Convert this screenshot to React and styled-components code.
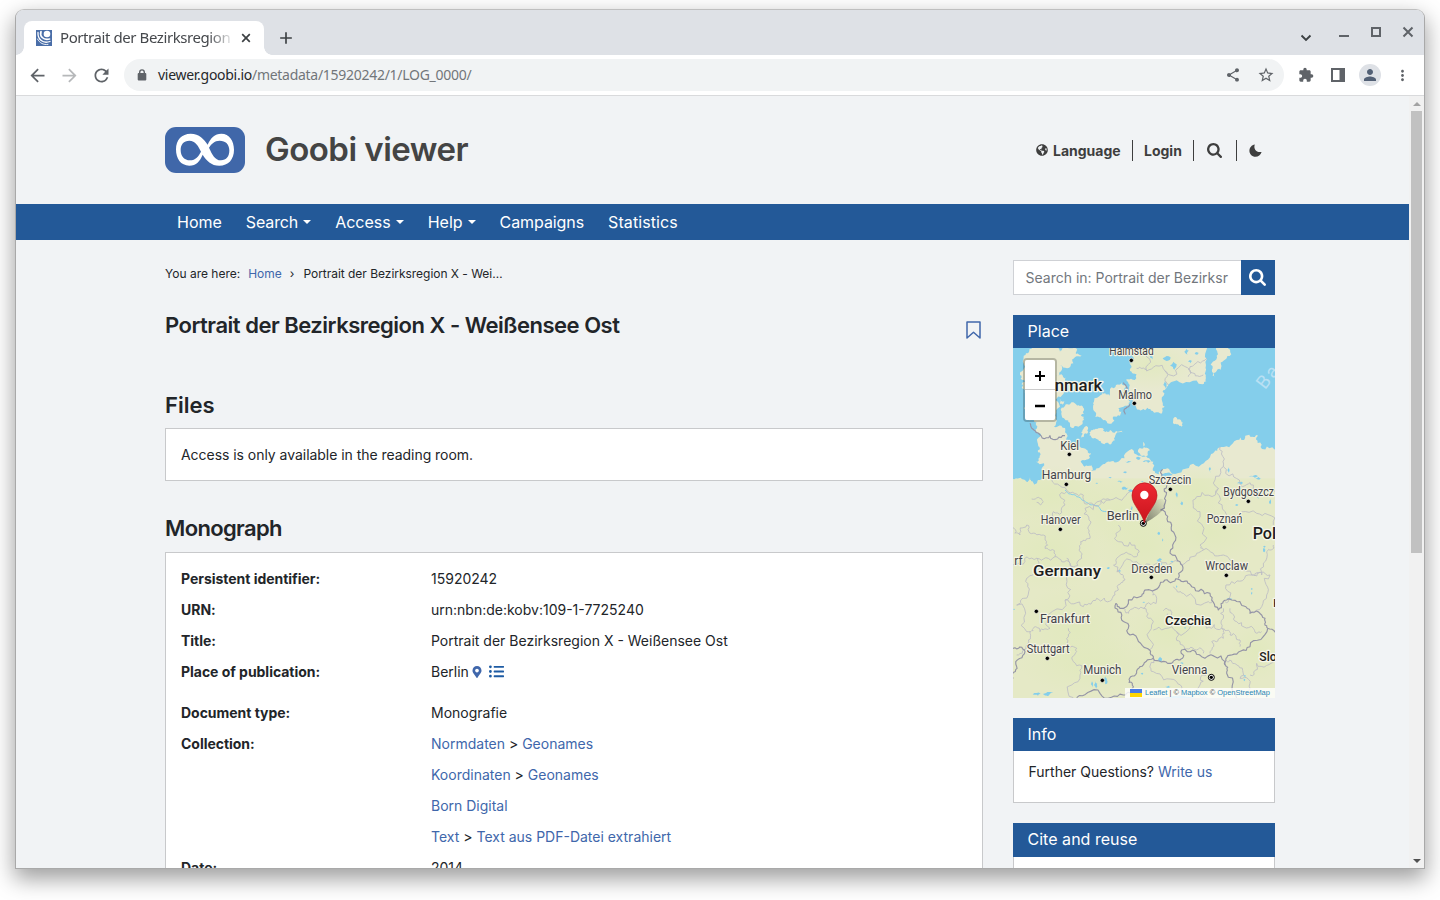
import React from "react";
import styled, { createGlobalStyle } from "styled-components";
import {
  MdArrowBack, MdArrowForward, MdRefresh, MdShare, MdStarBorder,
  MdExtension, MdPerson, MdMoreVert, MdAdd,
} from "react-icons/md";
import { FaGlobeAmericas, FaMapMarkerAlt, FaListUl } from "react-icons/fa";

const BLUE = "#235998";
const LINK = "#4067ab";

const GlobalStyle = createGlobalStyle`
  * { box-sizing: border-box; }
  body { margin: 0; background: #fff; overflow: hidden; }
  svg { display: block; flex: none; }
`;

const Desktop = styled.div`
  height: 900px;
  padding: 9px 15px 31px;
  overflow: hidden;
`;
const Window = styled.div`
  width: 1410px;
  height: 860px;
  border: 1px solid #a9a9a9;
  border-top-color: #bfbfbf;
  border-radius: 9px 9px 0 0;
  overflow: hidden;
  background: #f1f3f5;
  box-shadow: 0 9px 22px 1px rgba(0, 0, 0, 0.38);
  display: flex;
  flex-direction: column;
`;

/* ---------- browser chrome ---------- */
const TabStrip = styled.div`
  height: 45px;
  flex: none;
  background: #dee1e6;
  display: flex;
  align-items: flex-end;
  padding-left: 8px;
  font-family: "Noto Sans", sans-serif;
`;
const Tab = styled.div`
  position: relative;
  width: 240px;
  height: 34px;
  background: #fff;
  border-radius: 8px 8px 0 0;
  display: flex;
  align-items: center;
  padding: 0 8px 0 12px;
  &::before, &::after {
    content: "";
    position: absolute;
    bottom: 0;
    width: 8px;
    height: 8px;
  }
  &::before { left: -8px; background: radial-gradient(circle at 0 0, transparent 7.5px, #fff 8px); }
  &::after { right: -8px; background: radial-gradient(circle at 100% 0, transparent 7.5px, #fff 8px); }
`;
const TabTitle = styled.div`
  width: 174px;
  margin-left: 8px;
  font-size: 15px;
  letter-spacing: -0.42px;
  line-height: 31px;
  height: 33px;
  color: #45484c;
  white-space: nowrap;
  overflow: hidden;
  mask-image: linear-gradient(to right, #000 148px, transparent 175px);
`;
const TabClose = styled.div`
  margin-left: 4px;
  color: #3c4043;
`;
const NewTab = styled.div`
  align-self: flex-end;
  margin: 0 0 7px 12px;
  color: #3c4043;
`;
const WindowButtons = styled.div`
  margin-left: auto;
  display: flex;
  align-items: center;
  height: 45px;
  color: #5f6368;
`;
const Toolbar = styled.div`
  height: 41px;
  flex: none;
  background: #fff;
  border-bottom: 1px solid #d9dadc;
  display: flex;
  align-items: center;
  padding-left: 11px;
  color: #5f6368;
`;
const ToolIcon = styled.div`
  width: 21px;
  margin-right: 11px;
  opacity: ${(p) => (p.$dim ? 0.45 : 1)};
`;
const AddressBar = styled.div`
  height: 32px;
  width: 1160px;
  margin-left: 1px;
  border-radius: 16px;
  background: #f1f3f4;
  display: flex;
  align-items: center;
  padding: 0 9px 0 13px;
`;
const Url = styled.div`
  flex: 1;
  margin-left: 11px;
  font: 14px/30px "Noto Sans", sans-serif;
  letter-spacing: -0.28px;
  color: #72767a;
  span { color: #26282b; }
`;
const ActionIcons = styled.div`
  display: flex;
  align-items: center;
  gap: 16px;
  margin-left: ${(p) => p.$l}px;
`;
const Avatar = styled.div`
  width: 22px;
  height: 22px;
  margin: 0 -3px;
  border-radius: 50%;
  background: #dee1e6;
  display: grid;
  place-items: center;
  color: #526075;
`;

/* ---------- page ---------- */
const Viewport = styled.div`
  flex: 1;
  min-height: 0;
  display: flex;
`;
const Page = styled.div`
  width: 1393px;
  height: 772px;
  overflow: hidden;
  font-family: Inter, sans-serif;
  font-size: 14px;
  color: #222529;
`;
const Scrollbar = styled.div`
  width: 15px;
  background: #f1f1f1;
  display: flex;
  flex-direction: column;
  align-items: center;
`;
const Thumb = styled.div`
  width: 11px;
  height: 442px;
  background: #c1c1c1;
`;
const ScrollArrow = styled.div`
  height: 15px;
  display: grid;
  place-items: center;
  margin-top: ${(p) => (p.$end ? "auto" : 0)};
`;
const PageHeader = styled.header`
  height: 108px;
  width: 1259px;
  padding: 0 13px 0 149px;
  display: flex;
  align-items: center;
`;
const Brand = styled.div`
  margin: -2px 0 0 20px;
  font-size: 33px;
  font-weight: 600;
  line-height: 46px;
  letter-spacing: -0.52px;
  color: #444;
`;
const UserNav = styled.div`
  margin-left: auto;
  display: flex;
  align-items: center;
  font-weight: 700;
  color: #3e3e3e;
`;
const UserItem = styled.div`
  height: 21px;
  width: ${(p) => p.$w}px;
  display: flex;
  align-items: center;
  gap: 5px;
  padding-left: ${(p) => p.$pad ?? 11}px;
  border-left: ${(p) => (p.$first ? "0" : "1px solid #3e3e3e")};
`;
const MainNav = styled.nav`
  height: 36px;
  background: ${BLUE};
  padding-left: 149px;
  display: flex;
  color: #fff;
`;
const NavItem = styled.div`
  padding: 0 12px;
  font-size: 16px;
  line-height: 36px;
  letter-spacing: ${(p) => p.$ls || 0}px;
  display: flex;
  align-items: center;
`;
const Caret = styled.i`
  margin-left: 5px;
  border: 4px solid transparent;
  border-top-color: #fff;
  border-bottom: 0;
`;
const Columns = styled.div`
  padding: 20px 0 0 149px;
  display: grid;
  grid-template-columns: 818px 262px;
  gap: 30px;
`;
const Crumbs = styled.div`
  height: 26px;
  display: flex;
  font-size: 12px;
  line-height: 27px;
  gap: 8px;
`;
const Current = styled.span`
  margin-left: 1px;
  letter-spacing: -0.03px;
`;
const Link = styled.a`
  color: ${LINK};
`;
const TitleRow = styled.div`
  margin-top: 24px;
  height: 30px;
  display: flex;
  justify-content: space-between;
  align-items: center;
`;
const Heading = styled.h2`
  margin: ${(p) => p.$top || 0}px 0 0;
  font-size: 22px;
  font-weight: 600;
  line-height: 30px;
  letter-spacing: ${(p) => p.$ls || 0}px;
`;
const Bookmark = styled.div`
  margin: 9px 2px 0 0;
`;
const Panel = styled.div`
  margin-top: ${(p) => p.$top}px;
  background: #fff;
  border: 1px solid #c8c9cb;
  padding: ${(p) => p.$pad || 11}px 15px;
`;
const Row = styled.div`
  display: grid;
  grid-template-columns: 250px 1fr;
  line-height: 31px;
  margin-bottom: ${(p) => p.$gap || 0}px;
  dt { font-weight: 700; letter-spacing: -0.03px; }
`;
const Value = styled.div`
  display: flex;
  align-items: center;
  white-space: pre;
`;
const Notice = styled.div`
  line-height: 29px;
  letter-spacing: -0.04px;
`;
const Inline = styled.span`
  margin-left: ${(p) => p.$l}px;
  color: ${(p) => p.$c};
`;
const SearchBox = styled.div`
  height: 35px;
  display: flex;
`;
const SearchField = styled.div`
  width: 228px;
  border: 1px solid #cfd1d5;
  border-right: 0;
  background: #fff;
  padding-left: 11.5px;
  line-height: 34px;
  color: #72777d;
  white-space: nowrap;
`;
const SearchButton = styled.div`
  width: 34px;
  background: ${BLUE};
  color: #fff;
  display: grid;
  place-items: center;
  padding-right: 1px;
`;
const Widget = styled.section`
  margin-top: 20px;
`;
const WidgetTitle = styled.div`
  height: ${(p) => p.$h || 33}px;
  background: ${BLUE};
  color: #fff;
  font-size: 16px;
  line-height: 33px;
  padding-left: 14.500px;
  letter-spacing: 0.03px;
`;
const WidgetBody = styled.div`
  height: 52px;
  background: #fff;
  border: 1px solid #c8c9cb;
  border-top: 0;
  padding-left: 14.5px;
  line-height: 42px;
`;
const MapFrame = styled.div`
  position: relative;
  height: 350px;
`;
const ZoomControl = styled.div`
  position: absolute;
  left: 10px;
  top: 10px;
  width: 34px;
  border: 2px solid rgba(0, 0, 0, 0.22);
  background-clip: padding-box;
  border-radius: 4px;
`;
const ZoomButton = styled.div`
  height: 30px;
  background: #fff;
  display: grid;
  place-items: center;
  padding-top: 2px;
  border-radius: ${(p) => (p.$top ? "2px 2px 0 0" : "0 0 2px 2px")};
  border-bottom: ${(p) => (p.$top ? "1px solid #ccc" : "0")};
`;
const Attribution = styled.div`
  position: absolute;
  right: 0;
  bottom: 0;
  height: 10px;
  width: 150px;
  padding-left: 5px;
  background: rgba(255, 255, 255, 0.8);
  display: flex;
  align-items: center;
  gap: 3px;
  font: 7.5px/10px "Liberation Sans", sans-serif;
  letter-spacing: -0.02px;
  white-space: nowrap;
  color: #444;
  a { color: #2a86b4; }
`;

/* ---------- drawings ---------- */
function SearchIcon({ size }) {
  return (
    <svg width={size} height={size} viewBox="0 0 1664 1664" fill="currentColor">
      <path d="M1152 704q0-185-131.500-316.500t-316.500-131.500-316.500 131.500-131.500 316.500 131.500 316.500 316.500 131.500 316.500-131.500 131.500-316.500zm512 832q0 52-38 90t-90 38q-54 0-90-38l-343-342q-179 124-399 124-143 0-273.500-55.500t-225-150-150-225-55.500-273.500 55.500-273.500 150-225 225-150 273.500-55.500 273.500 55.500 225 150 150 225 55.500 273.500q0 220-124 399l343 343q37 37 37 90z" />
    </svg>
  );
}

function Moon() {
  return (
    <svg width="13" height="13" viewBox="0 0 13 13" fill="currentColor">
      <path d="M5.800 0.400C4.200 4.500 7.200 8.900 12.600 7.900C11.700 10.900 9.300 12.700 6.500 12.700C3 12.700 0.400 10 0.400 6.700C0.400 3.500 2.700 0.900 5.800 0.400Z" />
    </svg>
  );
}

function Lock() {
  return (
    <svg width="10" height="12" viewBox="0 0 10 12">
      <rect x="0.700" y="4" width="8.600" height="7.500" rx="1" fill="currentColor" />
      <path d="M2.700 4.500V3.200a2.300 2.300 0 0 1 4.600 0V4.500" fill="none" stroke="currentColor" strokeWidth="1.400" />
    </svg>
  );
}

function Logo() {
  return (
    <svg width="80" height="46" viewBox="45 51 240 138">
      <rect x="45" y="51" width="240" height="138" rx="33" fill="#4067a9" />
      <path
        fill="#fff"
        fillRule="evenodd"
        d="M122 71C148 71 162 88 173 104C182 84 194 71 214 71C238 71 252 92 252 119C252 148 235 167 208 167C184 167 169 152 158 134C150 153 139 167 118 167C92 167 78 146 78 118C78 90 95 71 122 71Z
           M118 92C101 92 92 103 92 120C92 139 103 151 120 151C137 151 146 138 153 125C145 108 136 92 118 92Z
           M209 92C193 92 184 102 177 113C186 132 194 151 213 151C229 151 238 140 238 121C238 103 227 92 209 92Z"
      />
    </svg>
  );
}

function Favicon() {
  return (
    <svg width="16" height="16" viewBox="0 0 16 16">
      <rect width="16" height="16" fill="#4a6ea8" />
      <circle cx="11" cy="4" r="3.300" fill="#fff" />
      <g fill="none" stroke="#fff" strokeLinecap="round">
        <path d="M5 1.500C3.500 6 7 10.500 13.500 9" strokeWidth="1.700" />
        <path d="M2 2.500C1.500 9.500 7 14 14 11.500" strokeWidth="1.300" />
        <path d="M1.500 9C3.500 13 7.500 15.200 12 14.400" strokeWidth="0.900" />
      </g>
    </svg>
  );
}

/* Midpoint displacement turns a coarse outline into a natural coastline or border. */
function rough(points, amount, closed) {
  let seed = points[0] * 7.13 + points[1] * 3.71 + points.length;
  const rand = () => {
    seed = (seed * 16807 + 11) % 2147483647;
    return (seed % 1000) / 1000 - 0.5;
  };
  let pts = [];
  for (let i = 0; i < points.length; i += 2) pts.push([points[i], points[i + 1]]);
  if (closed) pts.push(pts[0]);
  for (let k = 0; k < 3; k++) {
    const next = [pts[0]];
    for (let i = 1; i < pts.length; i++) {
      const [ax, ay] = pts[i - 1];
      const [bx, by] = pts[i];
      const d = Math.hypot(bx - ax, by - ay);
      if (d > 7) {
        const o = rand() * amount * Math.min(d, 45);
        next.push([(ax + bx) / 2 - ((by - ay) / d) * o, (ay + by) / 2 + ((bx - ax) / d) * o]);
      }
      next.push(pts[i]);
    }
    pts = next;
  }
  return "M" + pts.map((p) => p.map((n) => n.toFixed(1)).join(" ")).join("L") + (closed ? "Z" : "");
}

const LAND = [
  [0,402,35,402,48,410,60,396,72,420,84,405,102,392,95,375,102,355,78,350,84,322,97,310,82,290,93,268,76,255,82,230,50,225,42,190,36,130,45,110,30,85,42,60,48,25,75,9,140,9,150,20,172,9,196,9,215,32,190,55,150,60,137,90,168,98,165,128,137,165,150,185,137,222,132,245,165,262,168,285,195,292,213,308,243,325,240,337,212,350,218,358,248,356,243,378,268,368,290,352,330,346,372,318,392,332,430,350,428,372,447,388,480,378,540,360,600,337,626,308,680,285,718,269,744,272,756,312,810,328,810,1070,0,1070],
  [165,182,198,178,222,196,222,225,205,245,180,240,162,220],
  [252,168,272,150,298,152,300,132,318,120,335,112,350,125,352,158,362,170,345,182,325,190,330,212,304,236,285,225,256,216,250,195],
  [238,262,265,250,285,262,300,255,318,258,338,262,315,286,290,293,265,284,244,277],
  [222,248,230,243,222,275,215,278],
  [358,0,372,42,362,70,380,88,348,104,360,140,370,178,395,195,428,198,450,205,464,185,458,140,478,116,500,106,578,118,587,95,588,60,606,0],
  [630,0,662,0,650,40,632,74,613,98,608,70,620,32],
  [493,217,519,233,515,250,492,238],
  [388,310,400,290,406,308,420,316,408,334,392,330],
  [150,162,163,168,160,182,150,176],
];

const REGIONS = [
  [120,395,170,435,220,450,250,480,300,465,360,440],
  [170,440,165,480,130,500,125,540],
  [300,465,225,490,235,545,240,580,212,590,215,640,180,655,170,640],
  [9,548,30,570,50,540,75,565,100,570,105,610,135,635],
  [325,540,325,590,385,615,380,635,320,640,322,680,345,705,325,735,305,765],
  [135,635,180,655,170,700,165,765,220,785,260,760,305,765],
  [9,660,30,655,80,640,135,635],
  [80,640,90,670,50,700,40,760,20,780,50,860,70,850,90,860,120,850,165,765],
  [175,850,175,900,200,920,190,950,210,990,190,1058],
  [60,860,50,900,20,930],
  [320,680,380,650,440,655,505,650],
  [510,655,560,625,580,615,640,630,660,645,725,690,755,690,770,620,790,600],
  [570,500,570,600,580,615],
  [630,305,640,365,625,430,560,455,570,500],
  [640,365,690,415,730,420,795,440],
  [625,430,650,510,740,505,790,540],
  [725,690,665,710,655,770,645,770],
  [725,690,780,690,770,750,720,800],
  [430,735,440,760,400,790,355,805,335,790],
  [400,790,430,830,425,910,415,915],
  [430,855,500,860,510,890,550,910,580,925],
  [500,860,590,850,635,850,640,880,605,890,600,925],
  [490,725,520,745,595,770,610,765],
  [640,790,635,850,660,870,690,885,690,905],
  [660,790,680,830,730,850,755,860],
  [380,70,410,78,465,78,480,90,540,75,580,90],
  [535,95,540,65,590,40],[405,9,408,75],[465,78,475,120],
  [650,950,680,960,690,1000,720,1030,710,1058],
  [720,990,740,955,795,945],[430,940,430,980,500,1010,500,1058],
  [590,980,570,1020,590,1058],
];
const BORDERS = [
  [60,235,78,262,120,272,165,272],
  [458,373,470,410,466,455,452,495,485,540,488,600,510,650,505,700],
  [318,775,330,790,390,755,420,735,465,705,510,705,545,725,600,745,625,795,650,765,690,770,720,805,765,820,773,850,795,862],
  [318,775,335,825,360,870,410,910,430,940],
  [430,940,480,955,510,945,515,915,575,935,645,950,645,960],
  [773,850,720,905,665,930,645,950,650,985,680,1060],
  [430,940,390,965,362,995,370,1025,340,1050,270,1045,200,1058],
  [9,910,45,920,20,965,10,1000],
  [346,208,348,190,360,178],[340,113,352,130,340,145],
];
const WATER = [
  [470,40,12,7],[490,62,10,12],[425,35,5,12],[530,20,7,9],[560,25,6,4],[465,120,5,12],[540,50,6,5],
  [385,340,7,5],[330,410,8,3],[345,430,10,5],[362,437,8,4],[345,382,6,3],[300,398,5,2],[470,390,18,6],
  [395,410,6,2],[500,450,3,8],[515,475,4,6],[365,490,3,8],[415,485,4,3],[410,350,12,4],[600,375,3,9],
  [655,375,3,8],[690,415,9,4],[730,395,14,3],[680,480,5,3],[745,450,3,12],[380,480,3,5],[745,400,9,4],
  [295,669,5,3],[328,678,5,3],[446,565,4,5],[458,587,2,7],[448,645,8,5],[452,657,5,3],[485,650,5,3],
  [475,674,5,2],[762,615,3,7],[763,605,4,3],[725,732,3,3],[725,745,2,5],[658,762,9,3],[500,725,2,4],
  [401,772,4,2],[525,849,3,2],[450,943,6,8],[246,1018,3,9],[257,1020,5,11],[285,1005,5,13],[112,1045,18,4],
  [704,993,4,3],[703,1005,3,4],[80,1048,12,4],[515,955,6,3],[12,793,3,2],[396,986,4,3],[475,1025,9,3],
  [780,470,3,8],[355,350,9,2],[260,415,4,2],
];
const LABELS = [
  ["Halmstad", 298, 29, 133], ["Malmo", 325, 161, 101], ["Kiel", 151, 314, 56],
  ["Hamburg", 95, 403, 149], ["Szczecin", 416, 418, 128], ["Bydgoszcz", 640, 453, 152],
  ["Berlin", 290, 525, 97], ["Hanover", 92, 537, 120], ["Poznań", 590, 534, 107],
  ["Dresden", 364, 684, 123], ["Wroclaw", 586, 676, 128], ["rf", 13, 661, 25],
  ["Frankfurt", 90, 833, 150], ["Stuttgart", 50, 924, 129], ["Munich", 220, 987, 114],
  ["Vienna", 485, 986, 107],
];
const COUNTRIES = [
  ["nmark", 134, 137, 143, 48], ["Germany", 69, 692, 204, 46], ["Pol", 728, 583, 70, 48],
  ["Czechia", 465, 841, 139, 40], ["Slo", 748, 948, 52, 38], ["K", 790, 785, 20, 34],
];
const DOTS = [
  [364,46],[373,175],[178,328],[169,418],[481,433],[715,469],[151,553],[643,547],
  [424,697],[649,691],[79,799],[112,940],[277,1006],
];
const HUES = [
  [120,450,130,60],[420,60,110,50],[330,500,120,70],[560,440,90,60],[120,620,120,80],[400,600,100,70],
  [200,850,130,90],[480,860,100,60],[250,960,160,60],[600,560,110,60],[740,920,60,60],
];

function RegionMap() {
  return (
    <svg width="262" height="350" viewBox="9 9 786 1050">
      <defs>
        <radialGradient id="green">
          <stop offset="0" stopColor="#dfe9ba" />
          <stop offset="1" stopColor="#dfe9ba" stopOpacity="0" />
        </radialGradient>
        <clipPath id="land">
          {LAND.map((p, i) => <path key={i} d={rough(p, 0.7, true)} />)}
        </clipPath>
        <linearGradient id="pin" x1="0" x2="0" y1="0" y2="1">
          <stop offset="0" stopColor="#ee2a33" />
          <stop offset="1" stopColor="#c9141d" />
        </linearGradient>
        <linearGradient id="shade" x1="0" x2="1" y1="1" y2="0">
          <stop offset="0" stopColor="#333" stopOpacity="0.6" />
          <stop offset="1" stopColor="#333" stopOpacity="0" />
        </linearGradient>
      </defs>
      <rect x="9" y="9" width="786" height="1050" fill="#84ceeb" />
      <g clipPath="url(#land)">
        <rect x="9" y="9" width="786" height="1050" fill="#e8e9d0" />
        <rect x="9" y="400" width="786" height="660" fill="#e5e9c6" />
        {HUES.map(([x, y, rx, ry], i) => (
          <ellipse key={i} cx={x} cy={y} rx={rx * 1.4} ry={ry * 1.5} fill="url(#green)" opacity="0.7" />
        ))}
      </g>
      {WATER.map(([x, y, w, h], i) => (
        <path key={i} fill="#84ceeb" d={rough([x - w, y, x, y - h, x + w, y - h / 3, x + w / 3, y + h], 0.5, true)} />
      ))}
      <path d={rough([165,435,200,455,235,475,270,490,290,500], 0.4)} fill="none" stroke="#84ceeb" strokeWidth="3" />
      <g fill="none" stroke="#bcbcc4" strokeWidth="2.500" strokeLinejoin="round">
        {REGIONS.map((p, i) => <path key={i} d={rough(p, 0.8)} />)}
        <path d={rough([460, 797, 468, 790, 482, 795, 485, 810, 475, 818, 472, 806], 0.4)} />
        <path d={rough([65, 462, 85, 457, 100, 470, 92, 480, 80, 472], 0.4)} />
      </g>
      <g fill="none" stroke="#9494a6" strokeWidth="3.400" strokeLinejoin="round">
        {BORDERS.map((p, i) => <path key={i} d={rough(p, 0.6)} />)}
      </g>
      <text transform="translate(765 136) rotate(-52)" fontFamily="Roboto, sans-serif" fontSize="56" fill="#b9e0f3" letterSpacing="6">Ba</text>
      <g fontFamily="Roboto, sans-serif" paintOrder="stroke" strokeLinejoin="round">
        {LABELS.map(([t, x, y, w]) => (
          <text key={t} x={x} y={y} textLength={w} lengthAdjust="spacingAndGlyphs" fontSize="37" fill="#43434a" stroke="#f3f3e3" strokeWidth="7">{t}</text>
        ))}
        {COUNTRIES.map(([t, x, y, w, s]) => (
          <text key={t} x={x} y={y} textLength={w} lengthAdjust="spacingAndGlyphs" fontSize={s} fontWeight="500" fill="#1d1d20" stroke="#f6f6ea" strokeWidth="8">{t}</text>
        ))}
      </g>
      {DOTS.map(([x, y]) => <circle key={x} cx={x} cy={y} r="6.500" fill="#000" stroke="#f5f5e8" strokeWidth="2" />)}
      {[[400, 535], [604, 997]].map(([x, y]) => (
        <g key={x}>
          <circle cx={x} cy={y} r="9" fill="#fff" stroke="#000" strokeWidth="3" />
          <circle cx={x} cy={y} r="5" fill="#000" />
        </g>
      ))}
      <path d="M404 535L432 470Q462 450 468 476Q466 500 404 535Z" fill="url(#shade)" />
      <path d="M403 534C396 500 366 480 366 451A37.500 37.500 0 0 1 441 451C441 480 410 500 403 534Z" fill="url(#pin)" stroke="#b9151c" strokeWidth="2" />
      <circle cx="403" cy="450" r="12.500" fill="#fff" />
    </svg>
  );
}

const Arrow = ({ up }) => (
  <svg width="8" height="4" viewBox="0 0 8 4">
    <path d={up ? "M0 4L4 0L8 4Z" : "M0 0H8L4 4Z"} fill={up ? "#a3a3a3" : "#505050"} />
  </svg>
);

export default function App() {
  return (
    <Desktop>
      <GlobalStyle />
      <Window>
        <TabStrip>
          <Tab>
            <Favicon />
            <TabTitle>Portrait der Bezirksregion</TabTitle>
            <TabClose>
              <svg width="20" height="14" viewBox="0 0 20 14"><path d="M6.200 3.200l7.600 7.600M13.800 3.200l-7.600 7.600" stroke="currentColor" strokeWidth="1.700" /></svg>
            </TabClose>
          </Tab>
          <NewTab><MdAdd size={20} /></NewTab>
          <WindowButtons>
            <svg width="130" height="45" viewBox="0 0 130 45" fill="none" stroke="currentColor" strokeWidth="2">
              <path d="M7.500 25.500L12 30L16.500 25.500" stroke="#3c4043" strokeWidth="1.900" />
              <path d="M45 26H55" />
              <rect x="78" y="18" width="8" height="8" />
              <path d="M109.500 17.500l9 9M118.500 17.500l-9 9" />
            </svg>
          </WindowButtons>
        </TabStrip>
        <Toolbar>
          <ToolIcon><MdArrowBack size={21} /></ToolIcon>
          <ToolIcon $dim><MdArrowForward size={21} /></ToolIcon>
          <ToolIcon><MdRefresh size={21} /></ToolIcon>
          <AddressBar>
            <Lock />
            <Url><span>viewer.goobi.io</span>/metadata/15920242/1/LOG_0000/</Url>
            <ActionIcons $l={12}>
              <MdShare size={16} />
              <MdStarBorder size={18} />
            </ActionIcons>
          </AddressBar>
          <ActionIcons $l={14}>
            <MdExtension size={16} />
            <svg width="16" height="16" viewBox="0 0 16 16"><path d="M1 1H15V15H1ZM3 3V13H9.500V3Z" fill="currentColor" fillRule="evenodd" /></svg>
            <Avatar><MdPerson size={18} /></Avatar>
            <MdMoreVert size={17} />
          </ActionIcons>
        </Toolbar>
        <Viewport>
          <Page>
            <PageHeader>
              <Logo />
              <Brand>Goobi viewer</Brand>
              <UserNav>
                <UserItem $first $pad={0} $w={96}><FaGlobeAmericas size={12} />Language</UserItem>
                <UserItem $w={61}>Login</UserItem>
                <UserItem $w={43} $pad={13}><SearchIcon size={15} /></UserItem>
                <UserItem $w={26} $pad={12}><Moon /></UserItem>
              </UserNav>
            </PageHeader>
            <MainNav>
              <NavItem>Home</NavItem>
              <NavItem $ls={-0.13}>Search<Caret /></NavItem>
              <NavItem>Access<Caret /></NavItem>
              <NavItem>Help<Caret /></NavItem>
              <NavItem $ls={-0.08}>Campaigns</NavItem>
              <NavItem $ls={0.08}>Statistics</NavItem>
            </MainNav>
            <Columns>
              <main>
                <Crumbs>
                  <span>You are here:</span>
                  <Link>Home</Link>
                  <span>›</span>
                  <Current>Portrait der Bezirksregion X - Wei…</Current>
                </Crumbs>
                <TitleRow>
                  <Heading $ls={-0.49}>Portrait der Bezirksregion X - Weißensee Ost</Heading>
                  <Bookmark>
                    <svg width="15" height="18" viewBox="0 0 15 18" fill="none" stroke={LINK} strokeWidth="1.500" strokeLinejoin="round">
                      <path d="M1 1H14V17L7.500 11.300L1 17Z" />
                    </svg>
                  </Bookmark>
                </TitleRow>
                <Heading $top={50}>Files</Heading>
                <Panel $top={8}><Notice>Access is only available in the reading room.</Notice></Panel>
                <Heading $top={32} $ls={-0.65}>Monograph</Heading>
                <Panel $top={9} $pad={10}>
                  <Row><dt>Persistent identifier:</dt><Value>15920242</Value></Row>
                  <Row><dt>URN:</dt><Value>urn:nbn:de:kobv:109-1-7725240</Value></Row>
                  <Row><dt>Title:</dt><Value>Portrait der Bezirksregion X - Weißensee Ost</Value></Row>
                  <Row $gap={10}>
                    <dt>Place of publication:</dt>
                    <Value>Berlin<Inline $l={2} $c={LINK}><FaMapMarkerAlt size={12} /></Inline><Inline $l={6} $c="#1d5ba3"><FaListUl size={15} /></Inline></Value>
                  </Row>
                  <Row><dt>Document type:</dt><Value>Monografie</Value></Row>
                  <Row>
                    <dt>Collection:</dt>
                    <div>
                      <Value><Link>Normdaten</Link>{" > "}<Link>Geonames</Link></Value>
                      <Value><Link>Koordinaten</Link>{" > "}<Link>Geonames</Link></Value>
                      <Value><Link>Born Digital</Link></Value>
                      <Value><Link>Text</Link>{" > "}<Link>Text aus PDF-Datei extrahiert</Link></Value>
                    </div>
                  </Row>
                  <Row><dt>Date:</dt><Value>2014</Value></Row>
                </Panel>
              </main>
              <aside>
                <SearchBox>
                  <SearchField>Search in: Portrait der Bezirksr</SearchField>
                  <SearchButton><SearchIcon size={17} /></SearchButton>
                </SearchBox>
                <Widget>
                  <WidgetTitle>Place</WidgetTitle>
                  <MapFrame>
                    <RegionMap />
                    <ZoomControl>
                      <ZoomButton $top><svg width="10" height="10"><path d="M5 0V10M0 5H10" stroke="#000" strokeWidth="2" /></svg></ZoomButton>
                      <ZoomButton><svg width="10" height="10"><path d="M0 5H10" stroke="#000" strokeWidth="2.500" /></svg></ZoomButton>
                    </ZoomControl>
                    <Attribution>
                      <svg width="12" height="8"><rect width="12" height="4" fill="#4c7be1" /><rect y="4" width="12" height="4" fill="#ffd500" /></svg>
                      <span><a>Leaflet</a> | © <a>Mapbox</a> © <a>OpenStreetMap</a></span>
                    </Attribution>
                  </MapFrame>
                </Widget>
                <Widget>
                  <WidgetTitle>Info</WidgetTitle>
                  <WidgetBody>Further Questions? <Link>Write us</Link></WidgetBody>
                </Widget>
                <Widget>
                  <WidgetTitle $h={34}>Cite and reuse</WidgetTitle>
                  <WidgetBody />
                </Widget>
              </aside>
            </Columns>
          </Page>
          <Scrollbar>
            <ScrollArrow><Arrow up /></ScrollArrow>
            <Thumb />
            <ScrollArrow $end><Arrow /></ScrollArrow>
          </Scrollbar>
        </Viewport>
      </Window>
    </Desktop>
  );
}
